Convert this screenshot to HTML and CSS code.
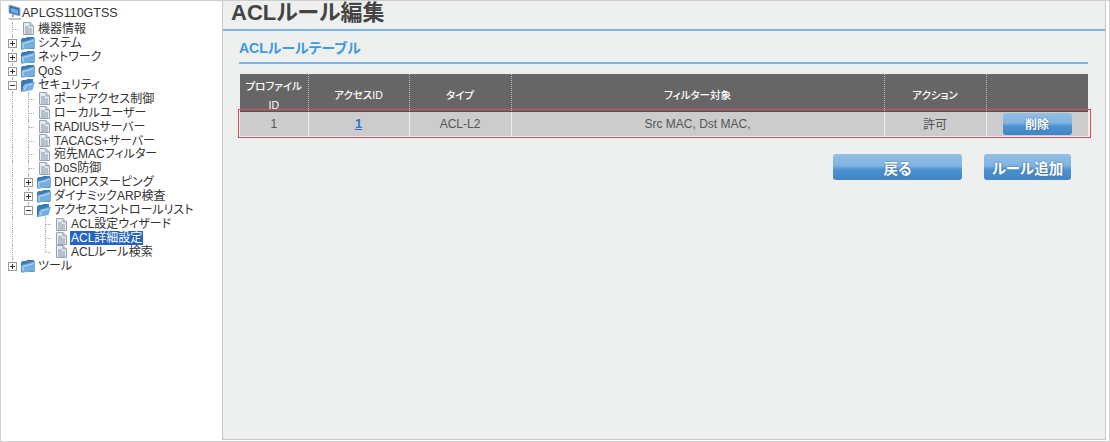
FILE: index.html
```html
<!DOCTYPE html>
<html lang="ja">
<head>
<meta charset="utf-8">
<title>ACLルール編集</title>
<link rel="stylesheet" href="styles.css">
</head>
<body>
<svg class="defs" width="0" height="0" aria-hidden="true">
  <defs>
    <symbol id="doc" viewBox="0 0 11 13">
      <path d="M.5 .5h6.500l3.500 3.500v8.500H.5z" fill="#e6ebf1" stroke="#98a3b0"/>
      <path d="M7 .5V4h3.500" fill="#c3ccd6" stroke="#98a3b0"/>
      <path d="M2 5h4M2 7h7M2 9h7M2 11h7" stroke="#8496a8"/>
    </symbol>
    <symbol id="folder" viewBox="0 0 14 16">
      <path d="M0 4.500 1.500 3h3.500L6 2h7v12H0z" fill="#3a7bb6"/>
      <path d="M.5 15V7C4 6.500 9 4.500 14 3v10.500C9 13.500 4 14 .5 15z" fill="#74aedd"/>
      <path d="M2 13V8.500C5.500 8 9 6.500 12.500 5.500" stroke="#c0dcf2" fill="none"/>
    </symbol>
    <symbol id="folder-open" viewBox="0 0 14 16">
      <path d="M0 4.500 1.500 3h3.500L6 2h6v4L3 8 1 15H0z" fill="#3a7bb6"/>
      <path d="M1 15 3.500 7.500 14 4.500l-2.500 8.500z" fill="#74aedd"/>
      <path d="M3.500 13l1.500-4.500 6.500-1.500" stroke="#c0dcf2" fill="none"/>
    </symbol>
  </defs>
</svg>
<div class="frame">
  <nav class="tree">
    <div class="row root">
      <svg class="ico-root" viewBox="0 0 14 17" width="14" height="17"><path d="M1 1l11 3v8L1 9z" fill="#2f72b4" stroke="#a7b1bb"/><path d="M3 4l7 2v4L3 8z" fill="#6fb0e4"/><path d="M5 10v3" stroke="#9aa5b0" stroke-width="2"/><path d="M0 14h13v2H1z" fill="#c2c7cd"/></svg>
      <span class="label">APLGS110GTSS</span>
    </div>
    <div class="row"><span class="cell conn"></span><span class="cell icon"><svg class="doc"><use href="#doc"/></svg></span><span class="label">機器情報</span></div>
    <div class="row"><span class="cell guide"><i class="exp plus"></i></span><span class="cell icon"><svg class="fld"><use href="#folder"/></svg></span><span class="label">システム</span></div>
    <div class="row"><span class="cell guide"><i class="exp plus"></i></span><span class="cell icon"><svg class="fld"><use href="#folder"/></svg></span><span class="label">ネットワーク</span></div>
    <div class="row"><span class="cell guide"><i class="exp plus"></i></span><span class="cell icon"><svg class="fld"><use href="#folder"/></svg></span><span class="label">QoS</span></div>
    <div class="row"><span class="cell guide"><i class="exp minus"></i></span><span class="cell icon"><svg class="fld"><use href="#folder-open"/></svg></span><span class="label">セキュリティ</span></div>
    <div class="row"><span class="cell guide"></span><span class="cell conn"></span><span class="cell icon"><svg class="doc"><use href="#doc"/></svg></span><span class="label">ポートアクセス制御</span></div>
    <div class="row"><span class="cell guide"></span><span class="cell conn"></span><span class="cell icon"><svg class="doc"><use href="#doc"/></svg></span><span class="label">ローカルユーザー</span></div>
    <div class="row"><span class="cell guide"></span><span class="cell conn"></span><span class="cell icon"><svg class="doc"><use href="#doc"/></svg></span><span class="label">RADIUSサーバー</span></div>
    <div class="row"><span class="cell guide"></span><span class="cell conn"></span><span class="cell icon"><svg class="doc"><use href="#doc"/></svg></span><span class="label">TACACS+サーバー</span></div>
    <div class="row"><span class="cell guide"></span><span class="cell conn"></span><span class="cell icon"><svg class="doc"><use href="#doc"/></svg></span><span class="label">宛先MACフィルター</span></div>
    <div class="row"><span class="cell guide"></span><span class="cell conn"></span><span class="cell icon"><svg class="doc"><use href="#doc"/></svg></span><span class="label">DoS防御</span></div>
    <div class="row"><span class="cell guide"></span><span class="cell guide"><i class="exp plus"></i></span><span class="cell icon"><svg class="fld"><use href="#folder"/></svg></span><span class="label">DHCPスヌーピング</span></div>
    <div class="row"><span class="cell guide"></span><span class="cell guide"><i class="exp plus"></i></span><span class="cell icon"><svg class="fld"><use href="#folder"/></svg></span><span class="label">ダイナミックARP検査</span></div>
    <div class="row"><span class="cell guide"></span><span class="cell guide end"><i class="exp minus"></i></span><span class="cell icon"><svg class="fld"><use href="#folder-open"/></svg></span><span class="label">アクセスコントロールリスト</span></div>
    <div class="row"><span class="cell guide"></span><span class="cell spacer"></span><span class="cell conn"></span><span class="cell icon"><svg class="doc"><use href="#doc"/></svg></span><span class="label">ACL設定ウィザード</span></div>
    <div class="row"><span class="cell guide"></span><span class="cell spacer"></span><span class="cell conn"></span><span class="cell icon"><svg class="doc"><use href="#doc"/></svg></span><span class="label selected">ACL詳細設定</span></div>
    <div class="row"><span class="cell guide"></span><span class="cell spacer"></span><span class="cell conn last"></span><span class="cell icon"><svg class="doc"><use href="#doc"/></svg></span><span class="label">ACLルール検索</span></div>
    <div class="row"><span class="cell guide end"><i class="exp plus"></i></span><span class="cell icon"><svg class="fld"><use href="#folder"/></svg></span><span class="label">ツール</span></div>
  </nav>
  <main class="main">
    <h1 class="title">ACLルール編集</h1>
    <section class="content">
      <h2 class="subtitle">ACLルールテーブル</h2>
      <div class="table-wrap">
        <table class="acl">
          <thead>
            <tr>
              <th class="c1"><div class="two-line">プロファイル<br>ID</div></th>
              <th class="c2">アクセスID</th>
              <th class="c3">タイプ</th>
              <th>フィルター対象</th>
              <th class="c5">アクション</th>
              <th class="c6"></th>
            </tr>
          </thead>
          <tbody>
            <tr>
              <td>1</td>
              <td><a class="link" href="#">1</a></td>
              <td>ACL-L2</td>
              <td>Src MAC, Dst MAC,</td>
              <td>許可</td>
              <td class="btn-cell"><button class="btn small">削除</button></td>
            </tr>
          </tbody>
        </table>
        <div class="highlight"></div>
      </div>
      <div class="actions">
        <button class="btn wide">戻る</button>
        <button class="btn">ルール追加</button>
      </div>
    </section>
  </main>
</div>
</body>
</html>
```
FILE: styles.css
```css
* { box-sizing: border-box; }
html, body { margin: 0; height: 100%; background: #fff; }
body {
  width: 1110px;
  height: 442px;
  overflow: hidden;
  font-family: "Liberation Sans", "Noto Sans CJK JP", sans-serif;
  font-feature-settings: "palt";
  color: #444;
}
.defs { position: absolute; }
.frame {
  display: flex;
  width: 1110px;
  height: 442px;
  border: 1px solid #cfcfcf;
  background: #fff;
}
.tree {
  width: 221px;
  flex: none;
  padding: 5px 0 0 3px;
  font-size: 12px;
  color: #333;
}
.row {
  display: flex;
  align-items: stretch;
  height: 13.94px;
  line-height: 14px;
  white-space: nowrap;
}
.row.root {
  padding-left: 4px;
  align-items: flex-start;
  height: 16px;
  font-size: 12.5px;
}
.row.root .label { margin-left: 0; padding: 0; }
.ico-root { flex: none; margin: -2px 0 0; }
.label { padding: 0 1px; margin-left: 1px; height: 14px; }
.selected { background: #2465c2; color: #fff; }
.cell {
  position: relative;
  flex: none;
  width: 16px;
}
.cell.spacer { width: 17px; }
.cell.icon { display: flex; align-items: center; justify-content: center; }
.doc { width: 11px; height: 13px; flex: none; }
.fld { width: 14px; height: 16px; flex: none; }
.guide::before, .conn::before {
  content: "";
  position: absolute;
  left: 8px;
  top: 0;
  bottom: 0;
  border-left: 1px dotted #aaa;
}
.conn::after {
  content: "";
  position: absolute;
  left: 9px;
  right: 2px;
  top: 7px;
  border-top: 1px dotted #aaa;
}
.conn.last::before { bottom: 7px; }
.guide.end::before { bottom: 7px; }
.exp {
  position: absolute;
  left: 4px;
  top: 3px;
  width: 9px;
  height: 9px;
  background: #fff;
  border: 1px solid #999;
  z-index: 1;
}
.exp::before {
  content: "";
  position: absolute;
  left: 1px;
  top: 3px;
  width: 5px;
  height: 1px;
  background: #333;
}
.exp.plus::after {
  content: "";
  position: absolute;
  left: 3px;
  top: 1px;
  width: 1px;
  height: 5px;
  background: #333;
}
.main {
  flex: 1;
  display: flex;
  flex-direction: column;
  margin-right: 3px;
  margin-bottom: 1px;
  background: #eef0f0;
  border: 1px solid #c8c8c8;
  border-top: 0;
}
.title {
  height: 30px;
  margin: 0;
  padding: 0 0 0 8px;
  font-size: 22px;
  line-height: 24px;
  font-weight: 700;
  color: #444;
  border-bottom: 2px solid #7db2e2;
}
.content { padding: 0 17px 0 16px; }
.subtitle {
  height: 33px;
  margin: 0;
  padding-top: 7px;
  font-size: 14px;
  line-height: 20px;
  font-weight: 700;
  color: #3d9ade;
  border-bottom: 2px solid #7db2e2;
}
.table-wrap {
  position: relative;
  margin: 10px 0 0 1px;
}
.acl {
  width: 848px;
  border-collapse: collapse;
  table-layout: fixed;
  font-size: 12px;
  text-align: center;
}
.acl th {
  height: 37px;
  padding: 12px 0 0;
  vertical-align: top;
  background: #666;
  color: #fff;
  font-size: 10.5px;
  line-height: 18px;
  font-weight: 500;
  border-left: 1px dotted #bbb;
  border-bottom: 1px solid #555;
}
.acl th:first-child { border-left: 0; }
.acl th.c1 { width: 68px; padding-top: 3px; }
.two-line { height: 30px; line-height: 19px; }
.acl .c2 { width: 101px; }
.acl .c3 { width: 102px; }
.acl .c5 { width: 102px; }
.acl .c6 { width: 102px; }
.acl td {
  height: 25px;
  padding: 0;
  background: #ccc;
  color: #555;
  border-left: 1px solid #eee;
}
.acl td:first-child { border-left: 0; }
.link { color: #2a78d0; font-size: 13px; font-weight: 700; text-decoration: underline; }
.highlight {
  position: absolute;
  left: -2px;
  right: -3px;
  top: 35px;
  height: 29px;
  border: 1px solid #e6475c;
  pointer-events: none;
}
.btn {
  display: block;
  width: 87px;
  height: 26px;
  padding: 0;
  border: 0;
  border-radius: 3px;
  background: linear-gradient(#92c0e6, #80b4e0 45%, #4d92d0 60%, #3f85c6);
  color: #fff;
  font-family: inherit;
  font-feature-settings: "palt";
  font-size: 14.5px;
  font-weight: 700;
  text-shadow: 0 0 2px #35618c;
}
.btn.small {
  width: 69px;
  height: 22px;
  margin-left: 16px;
  font-size: 12px;
}
.btn.wide { width: 129px; }
.actions {
  display: flex;
  justify-content: flex-end;
  gap: 22px;
  margin: 18px 0 0;
  padding-right: 17px;
}
```
